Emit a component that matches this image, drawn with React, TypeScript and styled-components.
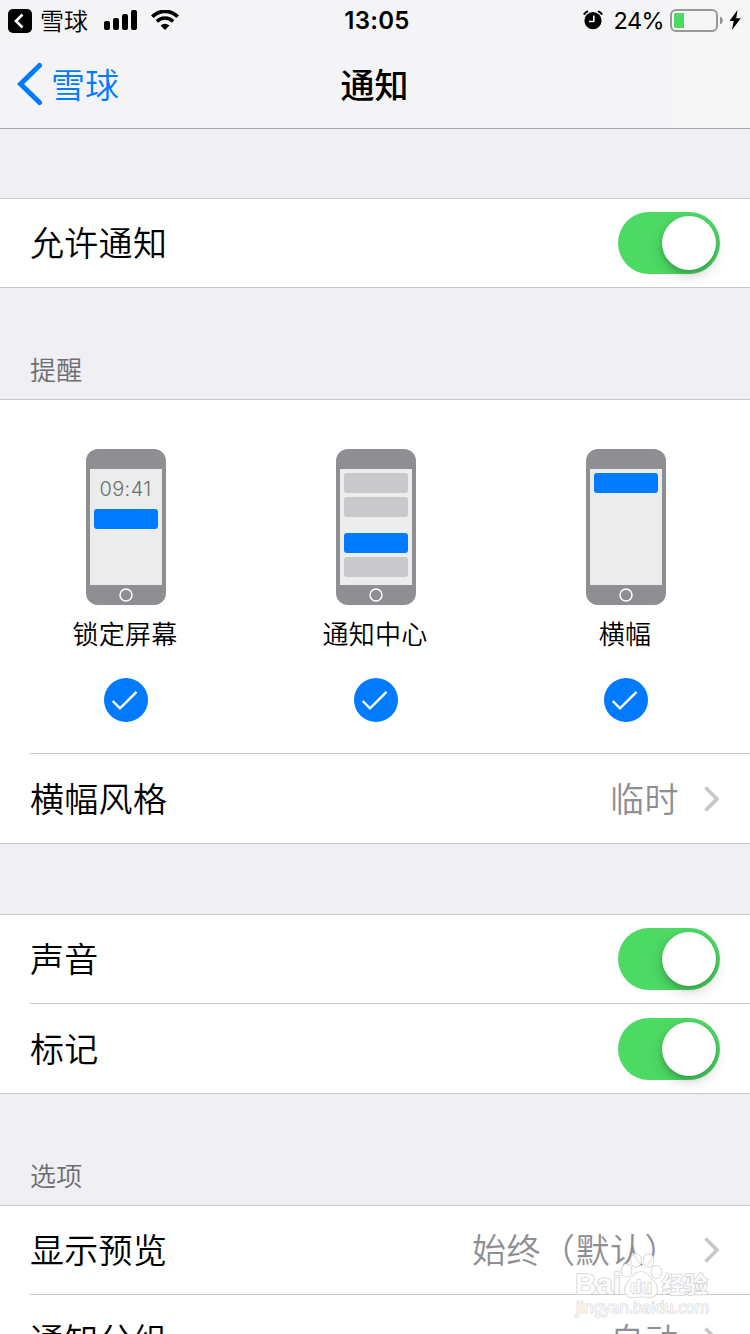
import React from "react";
import styled, { createGlobalStyle } from "styled-components";

const cjk = `"Noto Sans CJK SC DemiLight", "Noto Sans CJK SC", sans-serif`;
const latin = `Inter, "Noto Sans CJK SC", sans-serif`;
const blue = "#007aff";
const line = "#c8c7cc";

const GlobalStyle = createGlobalStyle`
  html, body { margin: 0; padding: 0; background: #efeff4; }
  body { overflow: hidden; }
  *, *::before, *::after { box-sizing: border-box; }
`;

const Screen = styled.div`
  position: relative;
  width: 750px;
  height: 1334px;
  overflow: hidden;
  display: flex;
  flex-direction: column;
  background: #efeff4;
  font-family: ${cjk};
  font-weight: 350;
  color: #000;
`;

const Header = styled.header`
  flex: none;
  height: 129px;
  background: linear-gradient(to right, #f4f4f7 75%, #f6f6f7 100%);
  border-bottom: 1px solid #a7a7ab;
`;

const StatusBar = styled.div`
  height: 40px;
  display: grid;
  grid-template-columns: 1fr auto 1fr;
  align-items: center;
  padding: 0 9px 0 8px;
`;

const StatusLeft = styled.div`
  display: flex;
  align-items: center;
  font-size: 24px;
  line-height: 40px;
`;

const AppBadge = styled.svg`
  margin-top: 2px;
`;

const StatusApp = styled.span`
  margin: 0 16px 0 8px;
  line-height: 38px;
`;

const Signal = styled.svg`
  margin-right: 13px;
`;

const Clock = styled.div`
  font-family: ${latin};
  font-weight: 600;
  font-size: 24px;
  line-height: 38px;
  letter-spacing: 0.3px;
  padding: 2px 0 0 5px;
`;

const StatusRight = styled.div`
  display: flex;
  align-items: center;
  justify-content: flex-end;
`;

const Percent = styled.span`
  font-family: ${latin};
  font-weight: 400;
  font-size: 23.5px;
  line-height: 38px;
  letter-spacing: -0.6px;
  padding-top: 2px;
  margin: 0 6px 0 11px;
`;

const Battery = styled.svg`
  margin: 1px 5px 0 0;
`;

const NavBar = styled.nav`
  height: 88px;
  display: grid;
  grid-template-columns: 1fr auto 1fr;
  align-items: center;
  padding: 0 17px;
`;

const Back = styled.a`
  display: flex;
  align-items: center;
  gap: 8px;
  color: ${blue};
  font-size: 34px;
  line-height: 50px;
`;

const BackLabel = styled.span`
  padding-bottom: 1px;
`;

const Title = styled.h1`
  margin: 0;
  padding: 0 1px 1px 0;
  font-size: 34px;
  line-height: 50px;
  font-weight: 500;
  font-family: "Noto Sans CJK SC", sans-serif;
`;

const Gap = styled.div<{ $h: number }>`
  flex: none;
  height: ${(p) => p.$h}px;
`;

const SectionLabel = styled.div`
  flex: none;
  height: 111px;
  padding: 62px 30px 0;
  font-size: 26px;
  line-height: 38px;
  letter-spacing: 0.3px;
  color: #6d6d72;
`;

const Group = styled.section`
  flex: none;
  background: #fff;
  border-top: 1px solid ${line};
  border-bottom: 1px solid ${line};
`;

const Divider = styled.div`
  height: 1px;
  margin-left: 30px;
  background: ${line};
`;

const Row = styled.div<{ $h?: number }>`
  height: ${(p) => p.$h ?? 88}px;
  padding: 0 30px;
  display: flex;
  align-items: center;
  font-size: 34px;
  line-height: 50px;
  letter-spacing: 0.3px;
`;

const RowTitle = styled.span`
  flex: 1;
  padding-bottom: 2px;
`;

const RowValue = styled.span`
  color: #8e8e93;
  letter-spacing: 0.5px;
  padding-bottom: 2px;
  margin-right: 25px;
`;

const Track = styled.span`
  width: 102px;
  height: 62px;
  border-radius: 31px;
  background: #4cd964;
  display: flex;
  justify-content: flex-end;
  padding: 4px;
`;

const Knob = styled.span`
  width: 54px;
  height: 54px;
  border-radius: 50%;
  background: #fff;
  box-shadow: 0 6px 14px rgba(0, 0, 0, 0.16), 0 3px 5px rgba(0, 0, 0, 0.16);
`;

const Styles = styled.div`
  height: 353px;
  display: grid;
  grid-template-columns: repeat(3, 250px);
`;

const StyleOption = styled.div`
  display: flex;
  flex-direction: column;
  align-items: center;
  padding: 49px 0 0 2px;
`;

const Phone = styled.div`
  width: 80px;
  height: 156px;
  border-radius: 12px;
  background: #8e8e93;
  padding: 20px 4px 0;
  display: flex;
  flex-direction: column;
  align-items: center;
`;

const PhoneScreen = styled.div`
  width: 72px;
  height: 116px;
  background: #ececec;
  padding: 4px;
`;

const HomeButton = styled.svg`
  margin-top: 3px;
`;

const PhoneClock = styled.div`
  height: 36px;
  padding: 3px 1px 0 0;
  font-family: ${latin};
  font-weight: 350;
  font-size: 20px;
  line-height: 26px;
  letter-spacing: 0.4px;
  text-align: center;
  color: #6d6d72;
`;

const Banner = styled.div<{ $active?: boolean; $gap?: number }>`
  height: 20px;
  border-radius: 3px;
  margin-bottom: ${(p) => p.$gap ?? 4}px;
  background: ${(p) => (p.$active ? blue : "#c9c9cb")};
`;

const OptionName = styled.div`
  margin: 8px 2px 0 0;
  font-size: 26px;
  line-height: 40px;
  letter-spacing: 0.3px;
`;

const Check = styled.svg`
  margin-top: 25px;
`;

const Watermark = styled.svg`
  position: absolute;
  left: 570px;
  top: 1248px;
`;

function Switch() {
  return (
    <Track>
      <Knob />
    </Track>
  );
}

function Chevron() {
  return (
    <svg width="16" height="28" viewBox="0 0 16 28" fill="none">
      <path d="M1.500 2.500 13 14 1.500 25.500" stroke="#c7c7cc" strokeWidth="3.600" />
    </svg>
  );
}

function Option({ name, children }: { name: string; children: React.ReactNode }) {
  return (
    <StyleOption>
      <Phone>
        <PhoneScreen>{children}</PhoneScreen>
        <HomeButton width="14" height="14" viewBox="0 0 14 14" fill="none">
          <circle cx="7" cy="7" r="6" stroke="#fff" strokeWidth="1.500" />
        </HomeButton>
      </Phone>
      <OptionName>{name}</OptionName>
      <Check width="44" height="44" viewBox="0 0 44 44" fill="none">
        <circle cx="22" cy="22" r="22" fill={blue} />
        <path d="M8.700 23 16 30.300 32.500 13.800" stroke="#fff" strokeWidth="2.400" />
      </Check>
    </StyleOption>
  );
}

export default function App() {
  return (
    <Screen>
      <GlobalStyle />
      <Header>
        <StatusBar>
          <StatusLeft>
            <AppBadge width="24" height="24" viewBox="0 0 24 24" fill="none">
              <rect width="24" height="24" rx="5" fill="#000" />
              <path d="M14.500 5.500 8 12l6.500 6.500" stroke="#fff" strokeWidth="2.600" />
            </AppBadge>
            <StatusApp>雪球</StatusApp>
            <Signal width="34" height="20" viewBox="0 0 34 20">
              <rect x="0" y="11" width="6" height="9" rx="2" />
              <rect x="9" y="8" width="6" height="12" rx="2" />
              <rect x="18" y="4" width="6" height="16" rx="2" />
              <rect x="27" y="0" width="6" height="20" rx="2" />
            </Signal>
            <svg width="28" height="20" viewBox="0 0 28 20" fill="none">
              <path d="M1.300 6.700a18 18 0 0 1 25.400 0" stroke="#000" strokeWidth="3.700" />
              <path d="M5.900 11.400a11.500 11.500 0 0 1 16.200 0" stroke="#000" strokeWidth="3.500" />
              <path d="M14 20 9.600 15.600a6.200 6.200 0 0 1 8.800 0Z" fill="#000" />
            </svg>
          </StatusLeft>
          <Clock>13:05</Clock>
          <StatusRight>
            <svg width="20" height="20" viewBox="0 0 20 20" fill="none">
              <circle cx="10" cy="10.700" r="8.600" fill="#000" />
              <path d="M.8 4.600A10 10 0 0 1 5 1.200M19.200 4.600A10 10 0 0 0 15 1.200" stroke="#000" strokeWidth="2" />
              <path d="M10.800 5.500v6H6" stroke="#fff" strokeWidth="1.600" />
            </svg>
            <Percent>24%</Percent>
            <Battery width="54" height="23" viewBox="0 0 54 23" fill="none">
              <rect x="1" y="1" width="46" height="21" rx="5" stroke="#98989a" strokeWidth="2" />
              <path d="M4 5.500A1.500 1.500 0 0 1 5.500 4H14v15H5.500A1.500 1.500 0 0 1 4 17.500Z" fill="#4cd964" />
              <path d="M50 7.500c3.700 1.700 3.700 6.300 0 8Z" fill="#8e8e90" />
            </Battery>
            <svg width="12" height="20" viewBox="0 0 12 20">
              <path d="M8.500 0 .5 11h4.200L3 20l8.800-11.700H7.200Z" />
            </svg>
          </StatusRight>
        </StatusBar>
        <NavBar>
          <Back>
            <svg width="26" height="44" viewBox="0 0 26 44" fill="none">
              <path d="M22.500 3.500 3.500 22l19 18.500" stroke={blue} strokeWidth="5" strokeLinecap="round" />
            </svg>
            <BackLabel>雪球</BackLabel>
          </Back>
          <Title>通知</Title>
        </NavBar>
      </Header>

      <Gap $h={69} />
      <Group>
        <Row>
          <RowTitle>允许通知</RowTitle>
          <Switch />
        </Row>
      </Group>

      <SectionLabel>提醒</SectionLabel>
      <Group>
        <Styles>
          <Option name="锁定屏幕">
            <PhoneClock>09:41</PhoneClock>
            <Banner $active />
          </Option>
          <Option name="通知中心">
            <Banner />
            <Banner $gap={16} />
            <Banner $active />
            <Banner />
          </Option>
          <Option name="横幅">
            <Banner $active />
          </Option>
        </Styles>
        <Divider />
        <Row $h={89}>
          <RowTitle>横幅风格</RowTitle>
          <RowValue>临时</RowValue>
          <Chevron />
        </Row>
      </Group>

      <Gap $h={70} />
      <Group>
        <Row>
          <RowTitle>声音</RowTitle>
          <Switch />
        </Row>
        <Divider />
        <Row $h={89}>
          <RowTitle>标记</RowTitle>
          <Switch />
        </Row>
      </Group>

      <SectionLabel>选项</SectionLabel>
      <Group>
        <Row>
          <RowTitle>显示预览</RowTitle>
          <RowValue>始终（默认）</RowValue>
          <Chevron />
        </Row>
        <Divider />
        <Row $h={89}>
          <RowTitle>通知分组</RowTitle>
          <RowValue>自动</RowValue>
          <Chevron />
        </Row>
      </Group>

      <Watermark width="144" height="74" viewBox="0 0 144 74">
        <g fill="#fff" fillOpacity="0.85" stroke="#d6d6d8" strokeWidth="1.600" paintOrder="stroke">
          <ellipse cx="56.500" cy="22.500" rx="5" ry="6.300" />
          <ellipse cx="66" cy="12.500" rx="5" ry="6.500" />
          <ellipse cx="78.500" cy="12.500" rx="5" ry="6.500" />
          <ellipse cx="86.500" cy="24" rx="5" ry="6.300" />
          <path d="M71 24c7 0 9 6 13 10s5 13-2 15c-4 1-7-.500-11-.500s-7 1.500-11 .5c-7-2-6-11-2-15s6-10 13-10Z" />
          <text x="5" y="46" fontFamily="Liberation Sans, sans-serif" fontWeight="700" fontSize="29.500" textLength="46" lengthAdjust="spacingAndGlyphs">Bai</text>
          <text x="60" y="45" fontFamily="Liberation Sans, sans-serif" fontWeight="700" fontSize="19" textLength="22" lengthAdjust="spacingAndGlyphs">du</text>
          <text x="92" y="45" fontFamily="Noto Sans CJK SC, sans-serif" fontWeight="700" fontSize="23">经验</text>
          <text x="6" y="65" fontFamily="Noto Sans, sans-serif" fontWeight="400" fontSize="16" strokeWidth="1.200" textLength="133" lengthAdjust="spacingAndGlyphs">jingyan.baidu.com</text>
        </g>
      </Watermark>
    </Screen>
  );
}
